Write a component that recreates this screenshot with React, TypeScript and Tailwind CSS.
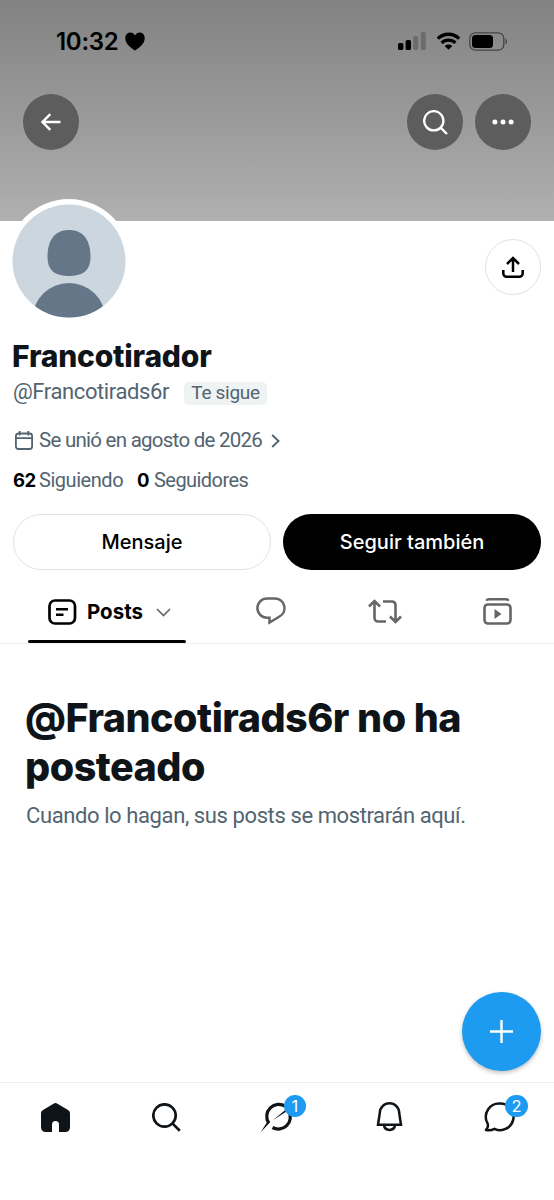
import type { ReactNode } from "react";

function StatusBar() {
  return (
    <div className="flex h-[26px] items-center justify-between pl-14 pr-[45px]">
      <div className="flex items-center gap-[6px]">
        <span className="mt-[2px] w-[63px] whitespace-nowrap text-[24px] font-semibold leading-none tracking-[-0.3px]">10:32</span>
        <svg width="20" height="19" viewBox="0 0 20 19">
          <path d="M10 18.5C6 15.8.3 11.8.3 6.2.3 2.7 2.5.5 5.3.5c2 0 3.7 1 4.7 3 1-2 2.7-3 4.7-3 2.8 0 5 2.2 5 5.7 0 5.6-5.7 9.6-9.7 12.3z" />
        </svg>
      </div>
      <div className="flex items-center">
        <svg width="28" height="18" viewBox="0 0 28 18">
          <rect y="11" width="5.4" height="7" rx="1.6" />
          <rect x="7.6" y="8" width="5.4" height="10" rx="1.6" />
          <rect x="15.2" y="4" width="5" height="14" rx="1.6" fillOpacity=".22" />
          <rect x="22.8" width="5" height="18" rx="1.6" fillOpacity=".22" />
        </svg>
        <svg className="ml-[10px]" width="25" height="18" viewBox="0 0 25 18">
          <path d="M1.8 6.6a15.3 15.3 0 0 1 21.4 0" fill="none" stroke="#000" strokeWidth="3.3" />
          <path d="M5.6 10.9a10 10 0 0 1 13.8 0" fill="none" stroke="#000" strokeWidth="3.2" />
          <path d="M8.7 14q3.8-2.9 7.6 0L12.5 17.8z" />
        </svg>
        <svg className="ml-[8px] mr-px" width="39" height="19" viewBox="0 0 39 19">
          <rect x=".8" y=".8" width="34" height="17.4" rx="5.5" fill="none" stroke="#000" strokeOpacity=".5" strokeWidth="1.3" />
          <rect x="3" y="3" width="21" height="13" rx="3.5" />
          <path d="M36.5 6.5c2 .8 2 5.2 0 6z" fillOpacity=".5" />
        </svg>
      </div>
    </div>
  );
}

function RoundButton({ label, children }: { label: string; children: ReactNode }) {
  return (
    <button aria-label={label} className="flex size-14 items-center justify-center rounded-full bg-[#5e5d5d]">
      {children}
    </button>
  );
}

function SearchIcon({ size, strokeWidth, color }: { size: number; strokeWidth: number; color: string }) {
  return (
    <svg width={size} height={size} viewBox="0 0 29 29" fill="none" stroke={color} strokeWidth={strokeWidth}>
      <circle cx="12.5" cy="12.5" r="11.2" />
      <path d="M20.4 20.4l7.4 7.4" />
    </svg>
  );
}

function Banner() {
  return (
    <header className="h-[221.5px] bg-linear-to-b from-[#828282] to-[#b0b0b0] pt-7">
      <StatusBar />
      <div className="mt-[40.4px] flex items-center pl-[22.5px] pr-[23px]">
        <RoundButton label="Atrás">
          <svg width="20" height="18" viewBox="0 0 20 18" fill="none" stroke="#fff" strokeWidth="2.4">
            <path d="M19.5 9H2M9.3 1.2L1.5 9l7.8 7.8" />
          </svg>
        </RoundButton>
        <div className="ml-auto flex gap-[11.6px]">
          <RoundButton label="Buscar">
            <SearchIcon size={25} strokeWidth={2.7} color="#fff" />
          </RoundButton>
          <RoundButton label="Más">
            <svg width="22" height="6" viewBox="0 0 22 6" fill="#fff">
              <circle cx="2.9" cy="3" r="2.5" />
              <circle cx="11" cy="3" r="2.5" />
              <circle cx="19.1" cy="3" r="2.5" />
            </svg>
          </RoundButton>
        </div>
      </div>
    </header>
  );
}

function Avatar() {
  return (
    <svg className="-mt-[22.5px] ml-[7px] shrink-0 self-start" width="124" height="124" viewBox="0 0 124 124">
      <defs>
        <clipPath id="avatar">
          <circle cx="62" cy="62" r="56.5" />
        </clipPath>
      </defs>
      <circle cx="62" cy="62" r="62" fill="#fff" />
      <circle cx="62" cy="62" r="56.5" fill="#cbd6de" />
      <path
        d="M62 31c13 0 21.5 8.5 21.500 27 0 13-7 19-21.500 19s-21.500-6-21.500-19C40.500 39.500 49 31 62 31z"
        fill="#647688"
      />
      <ellipse cx="62" cy="119" rx="36" ry="35" fill="#647688" clipPath="url(#avatar)" />
    </svg>
  );
}

function ProfileInfo() {
  return (
    <section className="px-[13px] text-[#536471]">
      <h1 className="mt-[21px] flex h-9 items-center whitespace-nowrap text-[30px] font-extrabold tracking-[-0.2px] text-[#0f1419]">
        <span className="-ml-px -mt-px">Francotirador</span>
      </h1>
      <div className="flex h-[34px] items-center gap-[14px] whitespace-nowrap font-[Roboto,sans-serif]">
        <span className="w-[157px] text-[22px] leading-none tracking-[-0.4px]">@Francotirads6r</span>
        <span className="mt-[3px] flex h-[23px] w-[83px] items-center justify-center rounded-[5px] bg-[#eff3f4] text-[19px] tracking-[-0.3px]">
          Te sigue
        </span>
      </div>
      <div className="mt-4 flex h-[32px] items-center whitespace-nowrap font-[Roboto,sans-serif] text-[20.5px]">
        <svg className="ml-[2px]" width="18" height="19" viewBox="0 0 18 19" fill="none" stroke="currentColor" strokeWidth="1.8">
          <rect x=".9" y="2.5" width="16.2" height="15.5" rx="2.5" />
          <path d="M1 7.2h16M4.7 0v4.500M13.3 0v4.500" />
        </svg>
        <span className="-mt-px ml-[6px] w-[223px] tracking-[-0.74px]">Se unió en agosto de 2026</span>
        <svg className="ml-[9px]" width="9" height="14" viewBox="0 0 9 14" fill="none" stroke="currentColor" strokeWidth="1.9">
          <path d="M1.2 1l6.3 6-6.3 6" />
        </svg>
      </div>
      <div className="mt-2 flex h-8 items-center whitespace-nowrap font-[Roboto,sans-serif] text-[20px]">
        <b className="w-[22px] font-[Inter,sans-serif] text-[18.5px] font-bold tracking-[-0.6px] text-black">62</b>
        <span className="-mt-px ml-1 w-[84px] tracking-[-0.45px]">Siguiendo</span>
        <b className="ml-[14px] w-[12px] font-[Inter,sans-serif] text-[18.5px] font-bold text-black">0</b>
        <span className="-mt-px ml-[5px] tracking-[-0.55px]">Seguidores</span>
      </div>
    </section>
  );
}

function Tabs() {
  return (
    <nav className="mt-[14px] flex h-[60px] border-b border-[#eff1f2] pl-7 text-[#666]">
      <div className="flex h-[59px] w-[158px] flex-col text-black">
        <div className="flex h-14 items-center pl-5">
          <svg width="29" height="26" viewBox="0 0 29 26" fill="none" stroke="#000" strokeWidth="2.7">
            <rect x="1.5" y="1.5" width="25.5" height="23" rx="5.5" />
            <path d="M8 10.3h12M8 15.8h7.500" strokeWidth="2.5" />
          </svg>
          <span className="ml-[10px] w-[57px] text-[20.5px] font-bold">Posts</span>
          <svg className="ml-3" width="15" height="9" viewBox="0 0 15 9" fill="none" stroke="#666" strokeWidth="1.6">
            <path d="M1 1l6.5 6.5L14 1" />
          </svg>
        </div>
        <div className="h-[3px] rounded-full bg-black" />
      </div>
      <div className="ml-7 flex h-[54px] items-center">
        <div className="flex w-[114px] justify-center">
          <svg width="30" height="28" viewBox="0 0 30 28" fill="none" stroke="currentColor" strokeWidth="2.5">
            <path d="M11 1.5h8a9.600 9.600 0 0 1 4.500 18L13.500 25.500v-4.800H11a9.600 9.600 0 0 1 0-19.200z" />
          </svg>
        </div>
        <div className="flex w-[113px] justify-center">
          <svg width="34" height="25" viewBox="0 0 34 25" fill="none" stroke="currentColor" strokeWidth="2.6">
            <path d="M1 7.5L6.500 2l5.500 5.500M6.500 2.500V19a3.500 3.500 0 0 0 3.500 3.500h8M15 2.500h9A3.500 3.500 0 0 1 27.500 6v16.500M22 17.500l5.500 5.500 5.500-5.500" />
          </svg>
        </div>
        <div className="flex w-[113px] justify-center">
          <svg width="29" height="27" viewBox="0 0 29 27" fill="none" stroke="currentColor" strokeWidth="2.6">
            <rect x="1.5" y="6.5" width="26" height="19" rx="3.5" />
            <path d="M3.5 2.7C4 1.5 5 1.3 6 1.3h17c1 0 2 .2 2.5 1.4" />
            <path d="M11.5 11v10l7-5z" fill="currentColor" stroke="none" />
          </svg>
        </div>
      </div>
    </nav>
  );
}

function EmptyState() {
  return (
    <section className="h-[348px] px-[26px] pt-[50px]">
      <h2 className="-ml-px whitespace-nowrap text-[39.5px] font-extrabold leading-[49px] tracking-[-0.5px] text-[#0f1419]">
        @Francotirads6r no ha
        <br />
        posteado
      </h2>
      <p className="mt-[8px] whitespace-nowrap font-[Roboto,sans-serif] text-[22px] leading-8 tracking-[-0.4px] text-[#536471]">
        Cuando lo hagan, sus posts se mostrarán aquí.
      </p>
    </section>
  );
}

function NavItem({ label, badge, children }: { label: string; badge?: number; children: ReactNode }) {
  return (
    <button aria-label={label} className="relative flex h-[68px] w-[111px] items-center justify-center">
      {children}
      {badge && (
        <span className="absolute left-[62px] top-[11.5px] flex size-[22.5px] items-center justify-center rounded-full bg-[#1d9bf0] text-[16.5px] text-white">
          {badge}
        </span>
      )}
    </button>
  );
}

function BottomNav() {
  return (
    <nav className="flex h-[118px] items-start border-t border-[#eeeff2]">
      <NavItem label="Inicio">
        <svg width="29" height="29" viewBox="0 0 29 29" fill="#0f1419">
          <path d="M12.5.7a4 4 0 0 1 4 0L27 7a3.500 3.500 0 0 1 2 3v14.500a4.500 4.500 0 0 1-4.500 4.500H18v-7.500a3.500 3.500 0 0 0-7 0V29H4.500A4.500 4.500 0 0 1 0 24.500V10a3.500 3.500 0 0 1 2-3z" />
        </svg>
      </NavItem>
      <NavItem label="Buscar">
        <SearchIcon size={29} strokeWidth={2.7} color="#0f1419" />
      </NavItem>
      <NavItem label="Grok" badge={1}>
        <svg width="34" height="32" viewBox="0 0 34 32" fill="none" stroke="#0f1419" strokeWidth="3.2">
          <path d="M25.5 5.500A12 12 0 0 0 8.700 22" />
          <path d="M29 10.500A12 12 0 0 1 12.500 26.500" />
          <path d="M.5 31.500L7.300 20.800l3 .2zM12.800 19.300L32 3.500l-4.300 6.200z" fill="#0f1419" stroke="none" />
        </svg>
      </NavItem>
      <NavItem label="Notificaciones">
        <svg className="ml-1" width="27" height="30" viewBox="0 0 27 30" fill="none" stroke="#0f1419" strokeWidth="2.5">
          <path d="M2 22.8L3.800 11a9.700 9.700 0 0 1 19.400 0L25 22.800zM8 23c.7 6.500 10.300 6.500 11 0" />
        </svg>
      </NavItem>
      <NavItem label="Mensajes" badge={2}>
        <svg className="ml-[2px]" width="31" height="30" viewBox="0 0 31 30" fill="none" stroke="#0f1419" strokeWidth="2.5" strokeLinejoin="round">
          <path d="M16 1.5a13.300 13.300 0 1 1-5.500 25.300c-2.500 1.400-5.500 1.700-8.500 1.200 2.500-2.500 2.500-4.500 1.300-7.200A13.300 13.300 0 0 1 16 1.500z" />
        </svg>
      </NavItem>
    </nav>
  );
}

export default function App() {
  return (
    <div className="flex h-[1200px] w-[554px] flex-col overflow-hidden bg-white font-[Inter,sans-serif] text-black">
      <Banner />
      <div className="flex h-[96.5px] justify-between pr-[13px]">
        <Avatar />
        <button aria-label="Compartir" className="mt-[17.5px] flex size-14 items-center justify-center rounded-full border border-[#dfe2e3]">
          <svg width="22" height="22" viewBox="0 0 22 22" fill="none" stroke="#000" strokeWidth="2.5">
            <path d="M11 16V2M5 8l6-6 6 6M1.3 14v3.500A3.300 3.300 0 0 0 4.600 20.700h12.800a3.300 3.300 0 0 0 3.300-3.200V14" />
          </svg>
        </button>
      </div>
      <ProfileInfo />
      <div className="mt-[17.4px] flex gap-3 px-[13px] text-[20px] font-medium">
        <button className="h-14 w-[258px] rounded-full border border-[#e0e3e4]">Mensaje</button>
        <button className="h-14 w-[258px] rounded-full bg-black text-white">Seguir también</button>
      </div>
      <Tabs />
      <EmptyState />
      <div className="flex h-[90.6px] justify-end pr-[13px]">
        <button aria-label="Publicar" className="flex size-[79px] items-center justify-center rounded-full bg-[#1d9bf0] shadow-[0_2px_4px_rgba(0,0,0,0.25)]">
          <svg width="23" height="23" viewBox="0 0 23 23" fill="none" stroke="#fff" strokeWidth="2.4">
            <path d="M11.5 0v23M0 11.5h23" />
          </svg>
        </button>
      </div>
      <BottomNav />
    </div>
  );
}
